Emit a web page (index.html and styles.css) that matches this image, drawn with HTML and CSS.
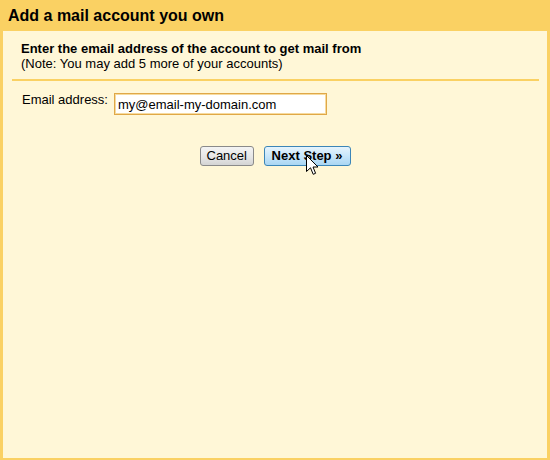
FILE: index.html
```html
<!DOCTYPE html>
<html>
<head>
<meta charset="utf-8">
<link rel="stylesheet" href="styles.css">
</head>
<body>
<div class="dialog">
  <h1 class="title">Add a mail account you own</h1>
  <div class="panel">
    <div class="intro">
      <div class="intro-main">Enter the email address of the account to get mail from</div>
      <div class="intro-note">(Note: You may add 5 more of your accounts)</div>
    </div>
    <div class="form-row">
      <label class="label" for="email">Email address:</label>
      <input class="input" id="email" type="text" value="my@email-my-domain.com">
    </div>
    <div class="actions">
      <button class="btn btn-cancel">Cancel</button>
      <button class="btn btn-next">Next Step »</button>
      <svg class="cursor" width="13" height="21" viewBox="0 0 13 21">
        <path d="M0.5 0.5 L0.5 16.5 L4.5 12.8 L7.2 19.3 L9.6 18.3 L7 12 L12 12 Z" fill="#fff" stroke="#000" stroke-width="1" stroke-linejoin="miter"/>
      </svg>
    </div>
  </div>
</div>
</body>
</html>
```
FILE: styles.css
```css
html, body {
  margin: 0;
  padding: 0;
}
body {
  width: 550px;
  height: 460px;
  background: #fad163;
  font-family: "Liberation Sans", Arial, sans-serif;
  color: #000;
}
.dialog {
  display: flex;
  flex-direction: column;
  height: 460px;
  box-sizing: border-box;
  padding: 0 3px 2px 3px;
}
.title {
  margin: 0;
  font-size: 16px;
  font-weight: bold;
  line-height: 31px;
  height: 31px;
  padding-left: 5px;
}
.panel {
  flex: 1;
  background: #fff7d7;
  padding: 0 8px 0 9px;
}
.intro {
  padding: 10px 0 8px 9px;
  border-bottom: 2px solid #fad163;
  font-size: 13px;
  line-height: 15px;
}
.intro-main {
  font-weight: bold;
}
.form-row {
  display: flex;
  align-items: flex-start;
  padding: 11px 0 0 10px;
  font-size: 13px;
}
.label {
  line-height: 15px;
  padding-top: 0;
  margin-right: 6px;
}
.input {
  width: 213px;
  height: 22px;
  box-sizing: border-box;
  border: 1px solid #e0a847;
  box-shadow: inset 0 0 0 1px #f6dba0;
  background: #fff;
  font-family: "Liberation Sans", Arial, sans-serif;
  font-size: 13px;
  padding: 0 3px;
  margin: 1px 0 0 0;
  color: #000;
  outline: none;
}
.actions {
  position: relative;
  display: flex;
  justify-content: center;
  gap: 10px;
  padding: 31px 0 0 1px;
  margin-left: -2px;
}
.btn {
  height: 20px;
  box-sizing: border-box;
  font-family: "Liberation Sans", Arial, sans-serif;
  font-size: 13px;
  line-height: 16px;
  padding: 0 6px;
  border-radius: 3px;
  color: #000;
  margin: 0;
}
.btn-cancel {
  width: 54px;
  border: 1px solid #8a8a8a;
  background: linear-gradient(#f4f4f4, #e6e6e6 55%, #d4d4d4);
}
.btn-next {
  width: 87px;
  border: 1px solid #3c86b8;
  background: linear-gradient(#e6f4fd, #c8e6fa 50%, #aad6f3);
  font-weight: bold;
}
.cursor {
  position: absolute;
  left: 296px;
  top: 40px;
}
```
